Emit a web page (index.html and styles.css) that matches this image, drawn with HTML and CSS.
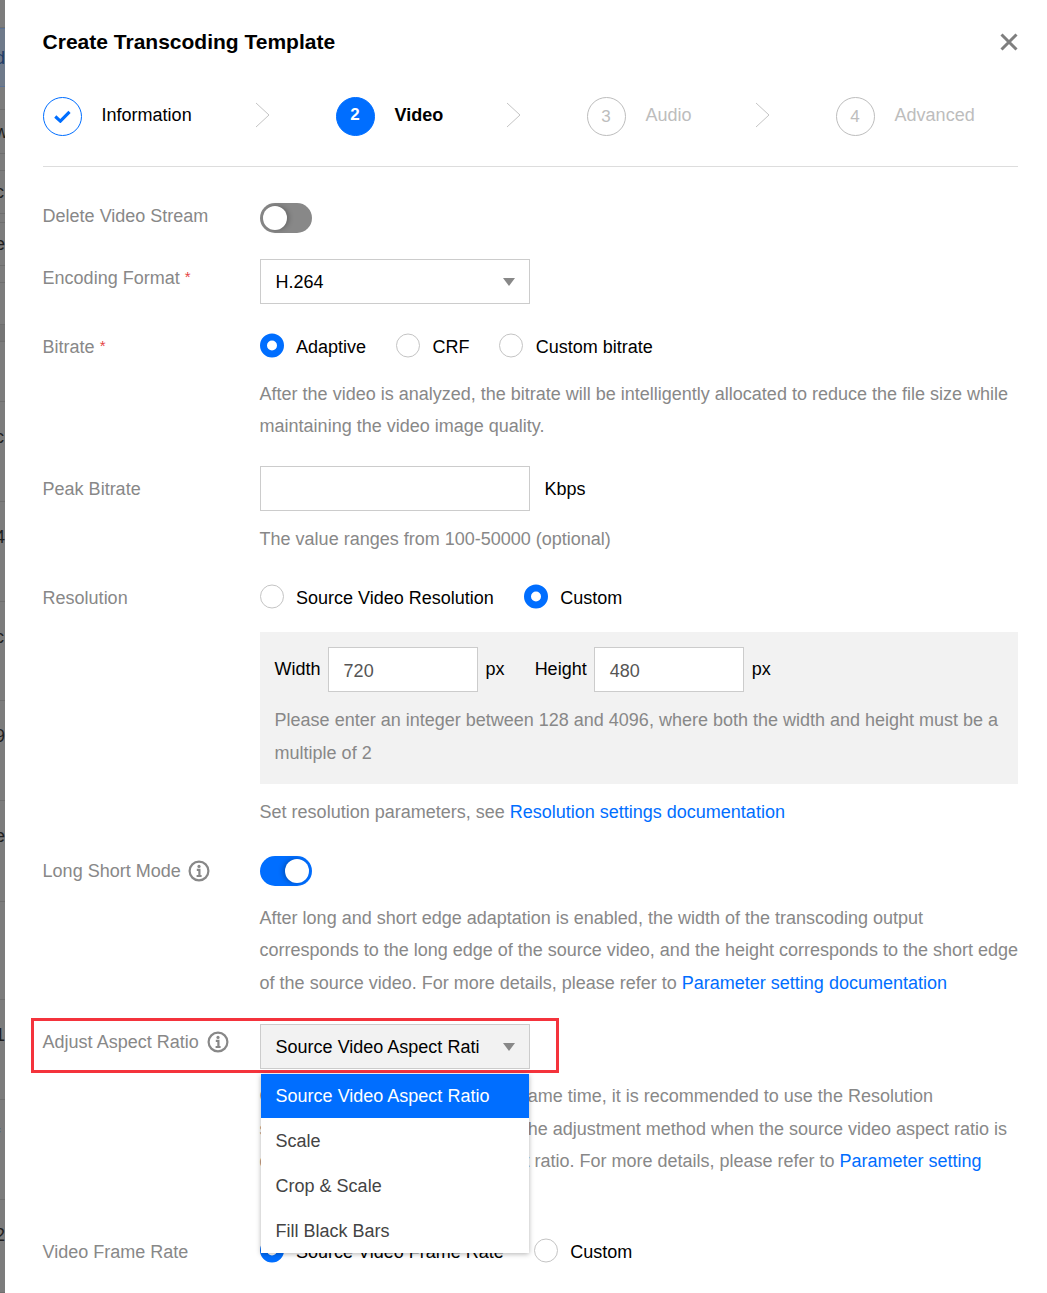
FILE: index.html
```html
<!DOCTYPE html>
<html lang="en">
<head>
<meta charset="utf-8">
<title>Create Transcoding Template</title>
<link rel="stylesheet" href="styles.css">
</head>
<body>
<div class="backdrop">
  <div class="bg-row"></div>
  <div class="bg-row bg-blue">d</div>
  <div class="bg-row"></div>
  <div class="bg-row">w</div>
  <div class="bg-row"></div>
  <div class="bg-row">c</div>
  <div class="bg-row"></div>
  <div class="bg-row">e</div>
  <div class="bg-row"></div>
  <div class="bg-row"></div>
  <div class="bg-row bg-dark"></div>
  <div class="bg-row"></div>
  <div class="bg-row bg-tall">c</div>
  <div class="bg-row bg-tall">4</div>
  <div class="bg-row bg-tall">c</div>
  <div class="bg-row bg-tall">9</div>
  <div class="bg-row bg-tall">e</div>
  <div class="bg-row bg-tall">l</div>
  <div class="bg-row bg-tall">1</div>
  <div class="bg-row bg-tall">f</div>
  <div class="bg-row bg-tall">2</div>
</div>
<main class="modal">
  <header class="modal-head">
    <h1>Create Transcoding Template</h1>
    <svg class="close" viewBox="0 0 18 18" width="18" height="18"><path d="M1.5 1.5 16.5 16.5M16.5 1.5 1.5 16.5"/></svg>
  </header>

  <ol class="steps">
    <li class="step step-1">
      <span class="circle done"><svg viewBox="0 0 16 12" width="17" height="13"><path d="M1.2 6 6 10.4 14.6 1.6"/></svg></span>
      <span class="step-name">Information</span>
      <svg class="chev" viewBox="0 0 15 26" width="15" height="26"><path d="M1 1 14 13 1 25"/></svg>
    </li>
    <li class="step step-2">
      <span class="circle active">2</span>
      <span class="step-name strong">Video</span>
      <svg class="chev" viewBox="0 0 15 26" width="15" height="26"><path d="M1 1 14 13 1 25"/></svg>
    </li>
    <li class="step step-3 off">
      <span class="circle">3</span>
      <span class="step-name">Audio</span>
      <svg class="chev" viewBox="0 0 15 26" width="15" height="26"><path d="M1 1 14 13 1 25"/></svg>
    </li>
    <li class="step step-4 off">
      <span class="circle">4</span>
      <span class="step-name">Advanced</span>
    </li>
  </ol>

  <form class="form">
    <div class="row row-delete">
      <div class="label label-delete">Delete Video Stream</div>
      <div class="field"><span class="toggle"></span></div>
    </div>

    <div class="row row-format">
      <div class="label label-select">Encoding Format <i>*</i></div>
      <div class="field"><div class="select"><span>H.264</span><b class="caret"></b></div></div>
    </div>

    <div class="row row-bitrate">
      <div class="label">Bitrate <i>*</i></div>
      <div class="field">
        <div class="radios">
          <label class="radio on">Adaptive</label>
          <label class="radio">CRF</label>
          <label class="radio">Custom bitrate</label>
        </div>
        <p class="help help-after-radio">After the video is analyzed, the bitrate will be intelligently allocated to reduce the file size while maintaining the video image quality.</p>
      </div>
    </div>

    <div class="row row-peak">
      <div class="label label-peak">Peak Bitrate</div>
      <div class="field">
        <div class="inline"><div class="input"></div><span class="unit">Kbps</span></div>
        <p class="help help-peak">The value ranges from 100-50000 (optional)</p>
      </div>
    </div>

    <div class="row row-res">
      <div class="label label-radio">Resolution</div>
      <div class="field">
        <div class="radios">
          <label class="radio">Source Video Resolution</label>
          <label class="radio on">Custom</label>
        </div>
        <div class="res-box">
          <div class="res-inputs">
            <span class="res-label">Width</span>
            <div class="input small">720</div>
            <span class="res-unit">px</span>
            <span class="res-label res-gap">Height</span>
            <div class="input small">480</div>
            <span class="res-unit">px</span>
          </div>
          <p class="help help-box">Please enter an integer between 128 and 4096, where both the width and height must be a multiple of 2</p>
        </div>
        <p class="help help-res">Set resolution parameters, see <a href="#">Resolution settings documentation</a></p>
      </div>
    </div>

    <div class="row row-long">
      <div class="label label-long">Long Short Mode <svg class="info" viewBox="0 0 22 22" width="22" height="22"><circle cx="11" cy="11" r="9.4"/><circle class="dot" cx="11" cy="6.4" r="1.6"/><path d="M8.8 9.8h2.6v6M8.6 16h5"/></svg></div>
      <div class="field">
        <span class="toggle toggle-on"></span>
        <p class="help help-long">After long and short edge adaptation is enabled, the width of the transcoding output corresponds to the long edge of the source video, and the height corresponds to the short edge of the source video. For more details, please refer to <a href="#">Parameter setting documentation</a></p>
      </div>
    </div>

    <div class="row row-aspect">
      <div class="label label-aspect">Adjust Aspect Ratio <svg class="info" viewBox="0 0 22 22" width="22" height="22"><circle cx="11" cy="11" r="9.4"/><circle class="dot" cx="11" cy="6.4" r="1.6"/><path d="M8.8 9.8h2.6v6M8.6 16h5"/></svg></div>
      <div class="field">
        <div class="select open"><span>Source Video Aspect Rati</span><b class="caret"></b></div>
        <p class="help help-aspect">Once the ratio is adjusted at the same time, it is recommended to use the Resolution<br>settings together. You can select the adjustment method when the source video aspect ratio is<br>different from the specified aspect ratio. For more details, please refer to <a href="#">Parameter setting</a></p>
        <ul class="menu">
          <li class="selected">Source Video Aspect Ratio</li>
          <li>Scale</li>
          <li>Crop &amp; Scale</li>
          <li>Fill Black Bars</li>
        </ul>
      </div>
      <div class="highlight"></div>
    </div>

    <div class="row row-fps">
      <div class="label label-radio">Video Frame Rate</div>
      <div class="field">
        <div class="radios">
          <label class="radio on">Source Video Frame Rate</label>
          <label class="radio">Custom</label>
        </div>
      </div>
    </div>
  </form>
</main>
</body>
</html>
```

FILE: styles.css
```css
*, *::before, *::after { box-sizing: border-box; }
html, body { margin: 0; height: 1293px; overflow: hidden; }
body {
  display: flex;
  background: #fff;
  font: 18px/32.5px "Liberation Sans", Arial, sans-serif;
  color: #000;
}

.backdrop {
  width: 5px; flex: none; height: 1293px; overflow: hidden; background: #7c7c7c;
  display: grid;
  grid-template-rows: 28px 59px 23px 44px 17px 43px 9px 43px 17px 42px 17px 60px 100px 100px 99px 100px 101px 98px 100px 100px 93px;
}
.bg-row {
  border-bottom: 1px solid #6f6f6f; overflow: hidden; white-space: nowrap;
  display: flex; align-items: center; text-indent: -5px; line-height: 20px; color: #1f1f1f;
}
.bg-blue { background: #6f7a8a; border-top: 1px solid #5a7296; border-bottom: 1px solid #5a7296; color: #1d3a66; }
.bg-dark { background: #757575; }
.bg-tall { align-items: flex-start; padding-top: 25px; }

.modal { flex: 1; padding: 0 29px 0 37.6px; background: #fff; min-width: 0; }

.modal-head { display: flex; justify-content: space-between; align-items: center; height: 84px; }
.modal-head h1 { margin: 0; font-size: 21px; line-height: 84px; font-weight: 700; color: #000; }
.close { fill: none; stroke: #7f7f7f; stroke-width: 3; }

.steps {
  display: flex; list-style: none; margin: 0; padding: 13px 0 30px;
  border-bottom: 1px solid #ddd; height: 83px;
}
.step { display: flex; align-items: center; flex: none; width: 293px; height: 39px; }
.step-2 { width: 251px; }
.step-3 { width: 249px; }
.step-4 { width: auto; }
.circle {
  width: 39px; height: 39px; border-radius: 50%; flex: none;
  border: 1px solid #bdbdbd; color: #bdbdbd;
  display: flex; align-items: center; justify-content: center; font-size: 17px;
}
.circle.done { border-color: #006eff; }
.circle.done svg { fill: none; stroke: #006eff; stroke-width: 2.9; }
.circle.active { background: #006eff; border-color: #006eff; color: #fff; font-weight: 700; padding-bottom: 2px; }
.step-name { margin-left: 20px; padding-bottom: 2px; }
.step-name.strong { font-weight: 700; }
.off .step-name { color: #bdbdbd; }
.off .circle { padding-top: 1px; }
.chev { margin: 0 65.6px 3px auto; fill: none; stroke: #c4c4c4; stroke-width: 1; }

.form { display: block; }
.row { display: flex; position: relative; }
.label { width: 217px; flex: none; color: #888; line-height: 24px; }
.label i { font-style: normal; color: #e54545; font-size: 15px; vertical-align: 2px; }
.field { flex: 1; min-width: 0; position: relative; }

.row-delete { margin-top: 36px; }
.row-format { margin-top: 26px; }
.row-bitrate { margin-top: 30px; }
.row-peak { margin-top: 23.3px; }
.row-res { margin-top: 30px; }
.row-long { margin-top: 27px; }
.row-aspect { margin-top: 25px; }
.row-fps { margin-top: 61.4px; }

.label-delete { padding-top: 1px; }
.label-select { padding-top: 6px; }
.label-radio { padding-top: 1px; }
.label-peak { padding-top: 11px; }
.label-long { display: flex; align-items: center; height: 30px; gap: 7px; }
.label-aspect { display: flex; align-items: center; height: 36px; gap: 8px; }

.toggle {
  display: block; width: 52px; height: 30px; border-radius: 15px; background: #888;
  position: relative;
}
.toggle::after {
  content: ""; position: absolute; left: 3px; top: 3px; width: 24px; height: 24px;
  border-radius: 50%; background: #fff; box-shadow: 2px 0 5px rgba(0,0,0,.25);
}
.toggle-on { background: #006eff; }
.toggle-on::after { left: 25px; box-shadow: -2px 0 5px rgba(0,0,0,.25); }

.select {
  width: 270px; height: 45px; border: 1px solid #ccc; background: #fff;
  display: flex; align-items: center; justify-content: space-between;
  padding: 0 14px 0 15px; line-height: 43px; white-space: nowrap;
}
.select span { padding-top: 2px; }
.select.open { background: #f2f2f2; }
.caret {
  width: 0; height: 0; border-style: solid; border-width: 8px 6.5px 0; border-color: #888 transparent transparent;
}

.radios { display: flex; gap: 30px; height: 26px; align-items: center; }
.radio { display: flex; align-items: center; gap: 12.4px; line-height: 26px; white-space: nowrap; }
.radio::before {
  content: ""; width: 24px; height: 24px; border-radius: 50%; border: 1px solid #c4c4c4; background: #fff; flex: none;
  transform: translateY(-1.5px);
}
.radio.on::before { border: 7px solid #006eff; }

.help { margin: 0; color: #888; }
.help a { color: #006eff; text-decoration: none; }
.help-after-radio { margin-top: 17.7px; }
.help-peak { margin-top: 12px; }
.help-res { margin-top: 12px; }
.help-long { margin: 15.7px -3px 0 0; }
.help-aspect { margin-top: 10.9px; }

.inline { display: flex; align-items: center; gap: 15px; }
.unit { padding-top: 2px; }
.input { width: 270px; height: 45px; border: 1px solid #ccc; background: #fff; }
.input.small { width: 150px; padding: 0 15px; line-height: 47px; color: #555; }

.res-box { background: #f2f2f2; margin-top: 21px; padding: 15px; height: 152px; }
.res-inputs { display: flex; align-items: center; height: 45px; }
.res-label { margin-right: 7px; position: relative; top: -1px; }
.res-gap { margin-left: 30px; }
.res-unit { margin-left: 8px; position: relative; top: -1px; }
.help-box { margin-top: 11.7px; }

.info { flex: none; fill: none; stroke: #888; stroke-width: 2.2; }
.info .dot { fill: #888; stroke: none; }

.highlight {
  position: absolute; left: -12px; top: -6px; width: 528px; height: 55px;
  border: 3px solid #f4333c; pointer-events: none;
}
.menu {
  position: absolute; left: 1px; top: 50px; width: 268px; margin: 0; padding: 0;
  list-style: none; background: #fff; color: #444; box-shadow: 0 1px 5px rgba(0,0,0,.3); z-index: 2;
}
.menu li { height: 45px; line-height: 46px; padding: 0 15px; }
.menu .selected { background: #006eff; color: #fff; height: 44px; line-height: 44px; }
```
